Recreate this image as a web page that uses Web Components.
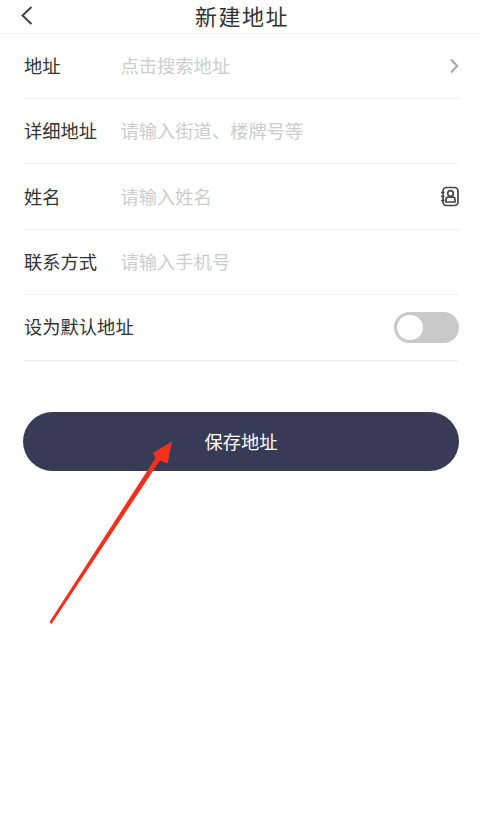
<!DOCTYPE html>
<html lang="zh">
<head>
<meta charset="utf-8">
<style>
  html, body { margin: 0; padding: 0; background: #fff; }
  body { width: 480px; height: 834px; overflow: hidden; position: relative; font-family: "Noto Sans CJK SC", "Noto Sans", sans-serif; }
</style>
</head>
<body>
<app-header>新建地址</app-header>
<form-row label="地址" placeholder="点击搜索地址" icon="chevron"></form-row>
<form-row label="详细地址" placeholder="请输入街道、楼牌号等"></form-row>
<form-row label="姓名" placeholder="请输入姓名" icon="contacts"></form-row>
<form-row label="联系方式" placeholder="请输入手机号"></form-row>
<form-row label="设为默认地址" icon="toggle"></form-row>
<save-button>保存地址</save-button>
<arrow-mark></arrow-mark>

<script>
class AppHeader extends HTMLElement {
    constructor() {
        super();
        this.attachShadow({ mode: 'open' });
        this.shadowRoot.innerHTML = `
            <style>
                :host {
                    display: flex;
                    justify-content: center;
                    position: relative;
                    height: 33.6px;
                    padding-left: 4px;
                    box-sizing: border-box;
                    border-bottom: 1px solid #f6f6f6;
                    color: #333;
                    font-size: 22px;
                    line-height: 31px;
                    letter-spacing: 1.5px;
                }
                svg { position: absolute; left: 20px; top: 5px; }
            </style>
            <svg width="14" height="20" viewBox="0 0 14 20" fill="none" stroke="#444" stroke-width="2">
                <path d="M11.5 2 L2.5 10.5 L11.5 19"/>
            </svg>
            <span><slot></slot></span>
        `;
    }
}
customElements.define('app-header', AppHeader);

const ROW_ICONS = {
    chevron: `<svg width="12" height="16" viewBox="0 0 12 16" fill="none" stroke="#a6a6a6" stroke-width="2">
        <path d="M4 1.5 L10.2 8 L4 14.5"/></svg>`,
    contacts: `<svg width="19" height="22" viewBox="0 0 19 22" fill="none" stroke="#444" stroke-width="1.7">
        <rect x="3" y="1.5" width="15" height="18" rx="3.5"/>
        <path d="M1 6.5 H4.5 M1 10.5 H4.5 M1 14.5 H4.5" stroke-width="1.4"/>
        <circle cx="10.5" cy="7.5" r="2.8"/>
        <path d="M6 16 V13.5 Q6 11.2 8.5 11.2 H12.5 Q15 11.2 15 13.5 V16 Z"/></svg>`,
    toggle: `<div class="toggle"><div class="knob"></div></div>`
};

class FormRow extends HTMLElement {
    connectedCallback() {
        const root = this.shadowRoot || this.attachShadow({ mode: 'open' });
        const icon = ROW_ICONS[this.getAttribute('icon')] || '';
        root.innerHTML = `
            <style>
                :host {
                    display: flex;
                    align-items: center;
                    height: 65.4px;
                    box-sizing: border-box;
                    margin: 0 21px 0 24px;
                    border-bottom: 1px solid #f0f0f0;
                    font-size: 18.3px;
                    color: #333;
                }
                .label { width: 96.5px; flex-shrink: 0; white-space: nowrap; margin-bottom: 2px; }
                .placeholder { flex: 1; color: #cdcdcd; white-space: nowrap; margin-bottom: 2px; }
                .icon { display: flex; align-items: center; }
                .toggle {
                    width: 65px;
                    height: 31.5px;
                    border-radius: 16px;
                    background: #c9c9c9;
                    padding: 3px;
                    box-sizing: border-box;
                }
                .knob {
                    width: 25.5px;
                    height: 25.5px;
                    border-radius: 50%;
                    background: #fff;
                }
            </style>
            <span class="label">${this.getAttribute('label')}</span>
            <span class="placeholder">${this.getAttribute('placeholder') || ''}</span>
            <span class="icon">${icon}</span>
        `;
    }
}
customElements.define('form-row', FormRow);

class SaveButton extends HTMLElement {
    constructor() {
        super();
        this.attachShadow({ mode: 'open' });
        this.shadowRoot.innerHTML = `
            <style>
                :host {
                    display: flex;
                    align-items: center;
                    justify-content: center;
                    height: 59px;
                    margin: 51.4px 21px 0 23px;
                    border-radius: 30px;
                    background: #383b55;
                    color: #fff;
                    font-size: 18.3px;
                }
            </style>
            <slot></slot>
        `;
    }
}
customElements.define('save-button', SaveButton);

// red annotation drawn over the page
class ArrowMark extends HTMLElement {
    constructor() {
        super();
        this.attachShadow({ mode: 'open' });
        this.shadowRoot.innerHTML = `
            <style>
                :host { position: absolute; left: 0; top: 0; pointer-events: none; }
                svg { display: block; }
            </style>
            <svg width="480" height="834" viewBox="0 0 480 834">
                <path d="M49.5 622 L51.5 624 L160 460.5 L167.5 463.5 L172 441.5 L153 453 L155.5 458 Z" fill="#f5301a"/>
            </svg>
        `;
    }
}
customElements.define('arrow-mark', ArrowMark);
</script>
</body>
</html>
